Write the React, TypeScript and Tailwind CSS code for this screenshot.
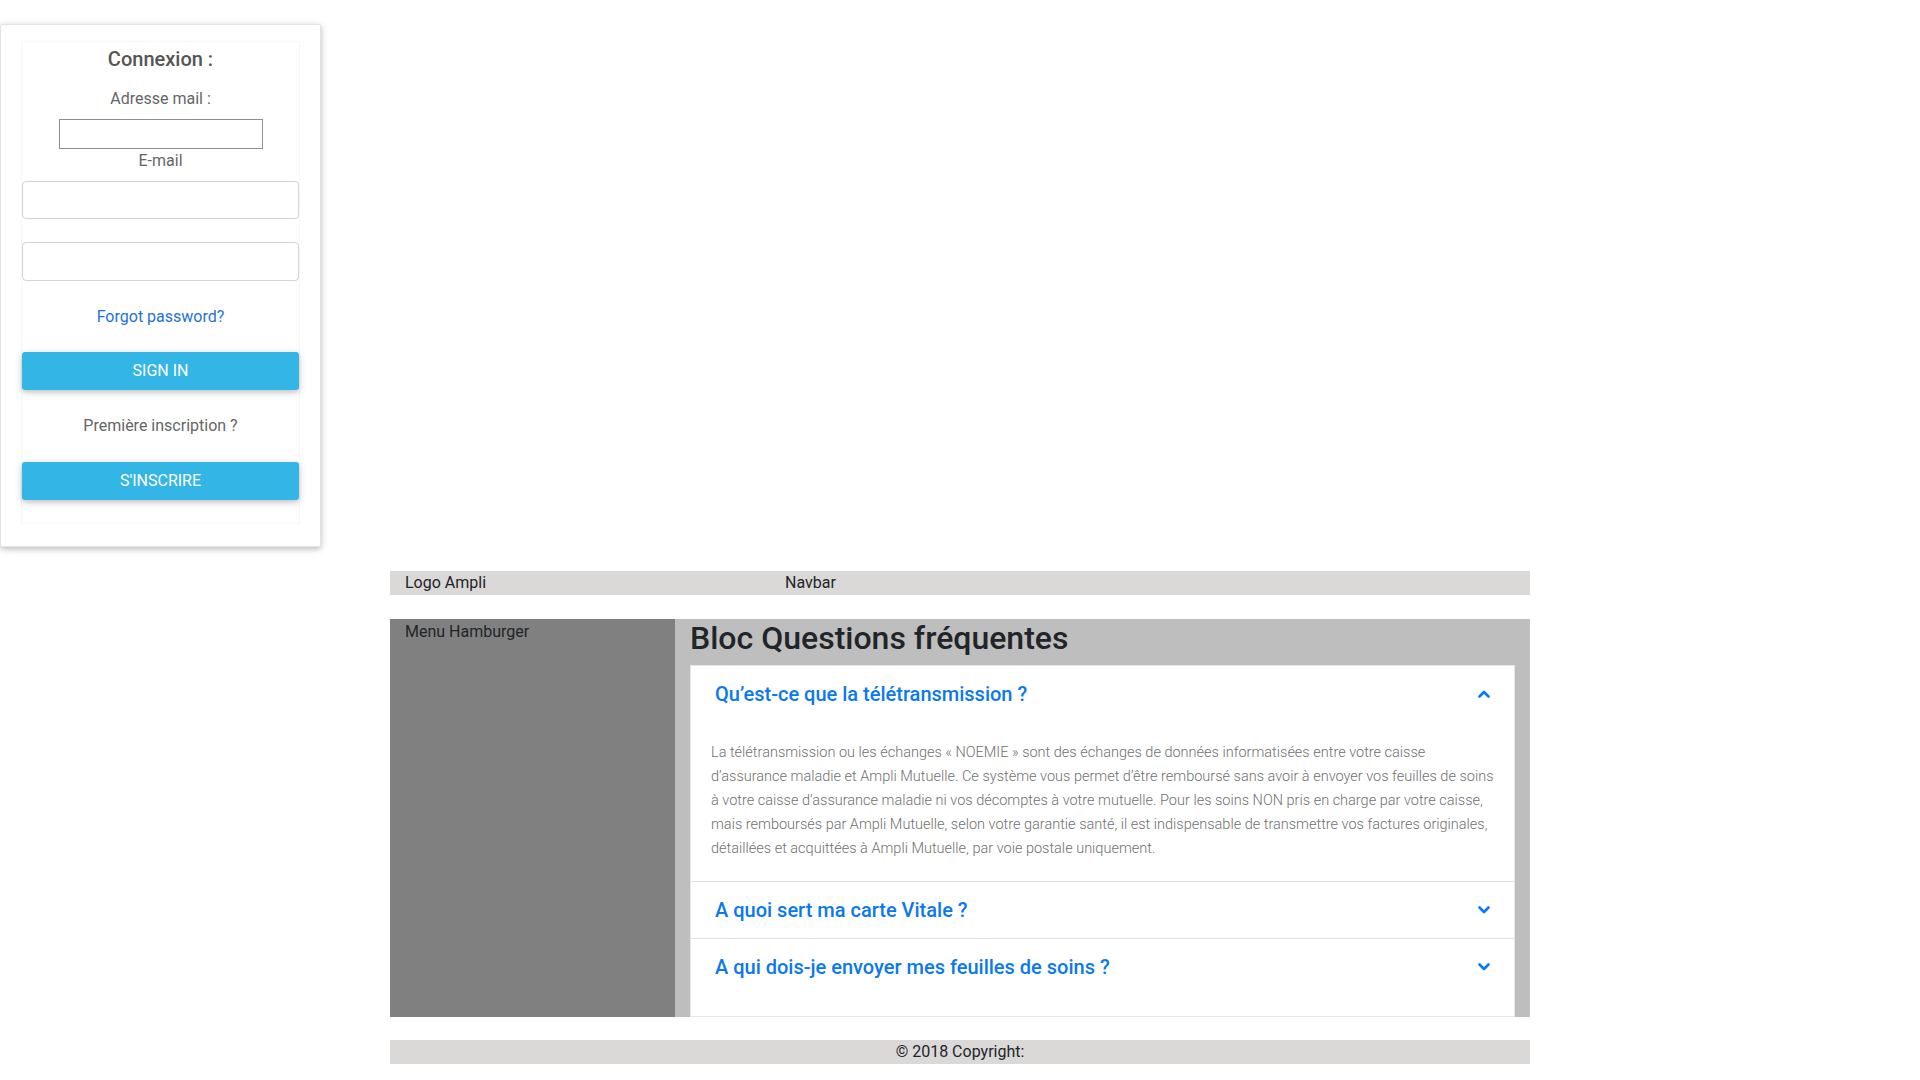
import React from 'react';

const faq = [
    {
        q: 'Qu’est-ce que la télétransmission ?',
        open: true,
        a: 'La télétransmission ou les échanges « NOEMIE » sont des échanges de données informatisées entre votre caisse d’assurance maladie et Ampli Mutuelle. Ce système vous permet d’être remboursé sans avoir à envoyer vos feuilles de soins à votre caisse d’assurance maladie ni vos décomptes à votre mutuelle. Pour les soins NON pris en charge par votre caisse, mais remboursés par Ampli Mutuelle, selon votre garantie santé, il est indispensable de transmettre vos factures originales, détaillées et acquittées à Ampli Mutuelle, par voie postale uniquement.',
    },
    { q: 'A quoi sert ma carte Vitale ?', open: false, a: '' },
    { q: 'A qui dois-je envoyer mes feuilles de soins ?', open: false, a: '' },
];

const Chevron = ({ up }: { up: boolean }) => (
    <svg width="12" height="10" viewBox="0 0 12 10" className="text-[#007bff]">
        <polyline
            points={up ? '1.5,7.5 6,3 10.5,7.5' : '1.5,2.5 6,7 10.5,2.5'}
            fill="none"
            stroke="currentColor"
            strokeWidth="2.6"
            strokeLinecap="round"
            strokeLinejoin="round"
        />
    </svg>
);

const LoginCard: React.FC = () => {
    return (
        <div className="w-[321px] bg-white border border-[#e3e3e3] rounded-[2px] shadow-[0_2px_5px_rgba(0,0,0,0.16),0_2px_10px_rgba(0,0,0,0.12)] px-[21px] pt-[17px] pb-[23px]">
            <div className="flex flex-col items-center text-center pt-[5px] pb-[23px] shadow-[0_0_0_1px_#f7f7f7]">
                <h5 className="text-[20px] leading-[24px] font-medium text-[#555]">Connexion :</h5>
                <label className="mt-[16px] text-[16px] leading-[24px] text-[#666]">Adresse mail :</label>
                <input className="mt-[8px] w-[204px] h-[30px] border border-[#8f8f8f] bg-white outline-none" />
                <label className="text-[16px] leading-[24px] text-[#666]">E-mail</label>
                <input className="mt-[8px] w-full h-[38px] border border-[#ced4da] rounded-[4px] bg-white outline-none" />
                <input type="password" className="mt-[23px] w-full h-[39px] border border-[#ced4da] rounded-[4px] bg-white outline-none" />
                <a className="mt-[24px] text-[16px] leading-[24px] text-[#1c72d8]">Forgot password?</a>
                <button className="mt-[23px] w-full h-[38px] rounded-[3px] bg-[#33b5e5] text-white text-[16px] font-normal uppercase shadow-[0_2px_5px_rgba(0,0,0,0.16),0_2px_10px_rgba(0,0,0,0.12)]">
                    Sign in
                </button>
                <p className="mt-[24px] text-[16px] leading-[24px] text-[#666]">Première inscription ?</p>
                <button className="mt-[24px] w-full h-[38px] rounded-[3px] bg-[#33b5e5] text-white text-[16px] font-normal uppercase shadow-[0_2px_5px_rgba(0,0,0,0.16),0_2px_10px_rgba(0,0,0,0.12)]">
                    S'inscrire
                </button>
            </div>
        </div>
    );
};

export default function App() {
    return (
        <div className="min-h-screen bg-white font-['Roboto',sans-serif] text-[#212529]">
            <div className="pt-[24px]">
                <LoginCard />
            </div>

            <div className="w-[1140px] mx-auto mt-[24px]">
                {/* Navbar */}
                <div className="flex h-[24px] bg-[#dbd8d8] text-[16px] leading-[24px]">
                    <div className="w-[380px] px-[15px]">Logo Ampli</div>
                    <div className="flex-1 px-[15px]">Navbar</div>
                </div>

                {/* Main */}
                <div className="flex h-[398px] mt-[24px]">
                    <div className="w-[285px] bg-[#808080] px-[15px] pt-[1px] text-[16px] leading-[24px]">Menu Hamburger</div>
                    <div className="flex-1 bg-[#bebebe] px-[15px] flex flex-col">
                        <h2 className="text-[32px] leading-[38px] font-medium text-[#212529] mb-[8px]">Bloc Questions fréquentes</h2>
                        <div className="flex-1 bg-white border border-[#e6e6e6]">
                            {faq.map((item, i) => (
                                <div key={i} className={i < faq.length - 1 ? 'border-b border-[#e2e2e2]' : ''}>
                                    <div className="flex items-center justify-between pl-[24px] pr-[24px] py-[16px]">
                                        <span className="text-[20px] leading-[24px] font-medium text-[#0a78ee]">{item.q}</span>
                                        <Chevron up={item.open} />
                                    </div>
                                    {item.open && (
                                        <div className="px-[20px] pt-[19px] pb-[20px] text-[14.5px] leading-[24px] font-light text-[#707070]">
                                            {item.a}
                                        </div>
                                    )}
                                </div>
                            ))}
                        </div>
                    </div>
                </div>

                {/* Footer */}
                <div className="mt-[23px] h-[24px] bg-[#dbd8d8] text-center text-[16px] leading-[24px]">© 2018 Copyright:</div>
            </div>
        </div>
    );
}
